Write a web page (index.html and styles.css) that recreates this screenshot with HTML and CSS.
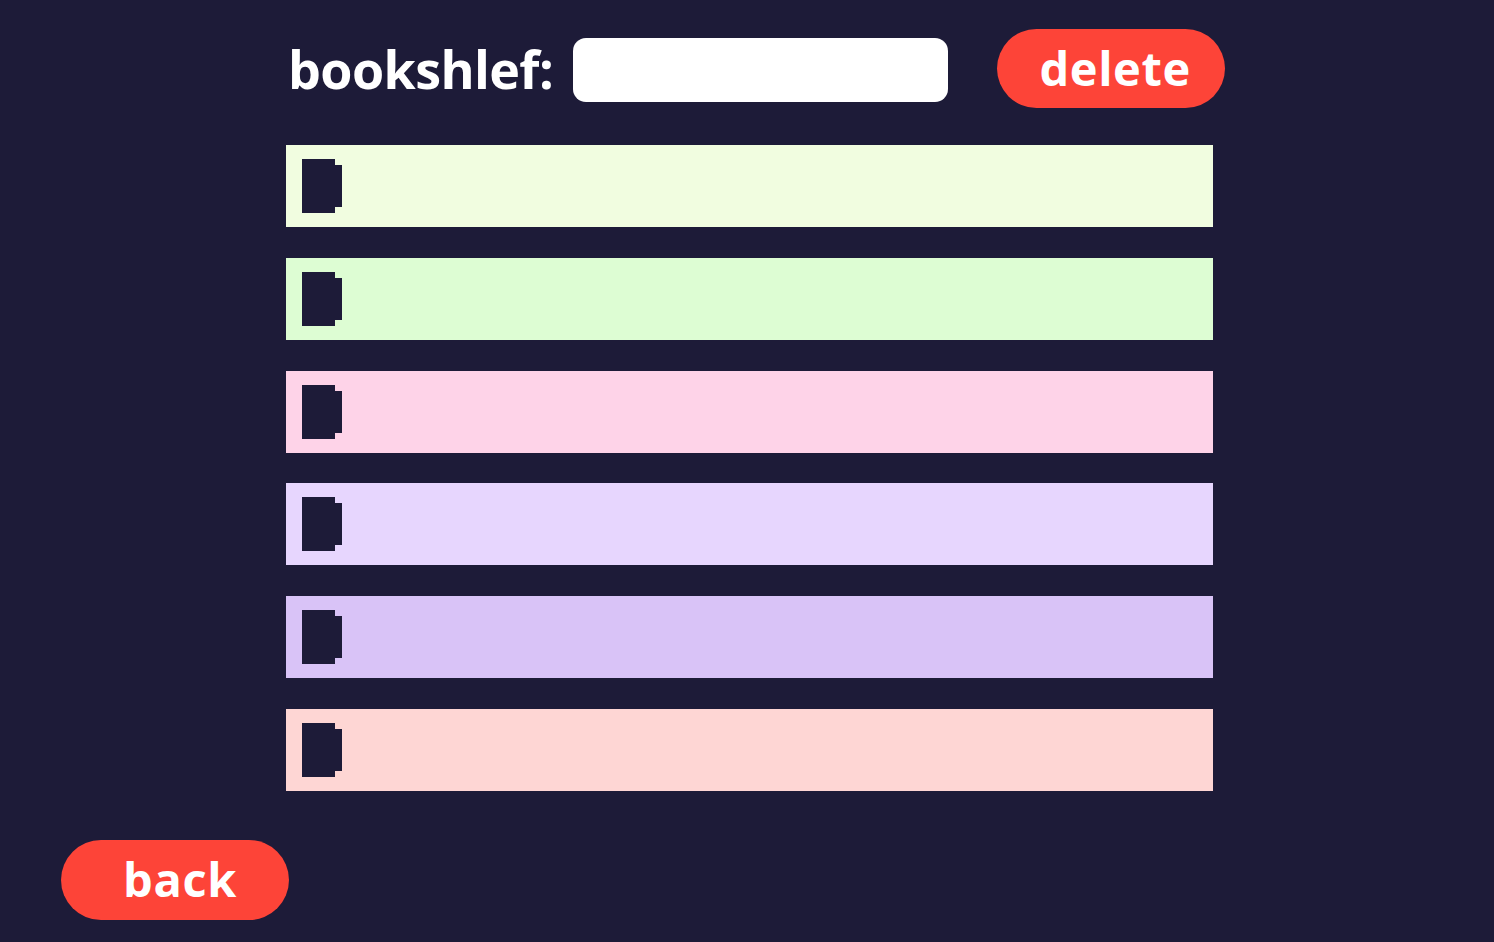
FILE: index.html
```html
<!DOCTYPE html>
<html>
<head>
<meta charset="utf-8">
<link rel="stylesheet" href="styles.css">
</head>
<body>
<div class="page">
  <section class="main">
    <header class="head">
      <h1 class="title">bookshlef:</h1>
      <div class="field"></div>
      <button class="btn btn-delete">delete</button>
    </header>
    <ul class="shelf">
      <li class="bar c1"><span class="book"></span></li>
      <li class="bar c2"><span class="book"></span></li>
      <li class="bar c3"><span class="book"></span></li>
      <li class="bar c4"><span class="book"></span></li>
      <li class="bar c5"><span class="book"></span></li>
      <li class="bar c6"><span class="book"></span></li>
    </ul>
  </section>
  <footer class="foot">
    <button class="btn btn-back">back</button>
  </footer>
</div>
</body>
</html>
```
FILE: styles.css
```css
html, body {
  margin: 0;
  padding: 0;
  background: #1d1b38;
  width: 1494px;
  height: 942px;
  overflow: hidden;
  font-family: "Open Sans", "Noto Sans", sans-serif;
}
.page {
  padding-top: 29px;
}
.main {
  padding-left: 286px;
}
.head {
  display: flex;
  align-items: center;
  height: 79px;
}
.title {
  margin: 0 0 0 2px;
  color: #ffffff;
  font-weight: 700;
  font-size: 52px;
  line-height: 1;
  letter-spacing: -0.6px;
}
.field {
  margin-left: 20px;
  width: 375px;
  height: 64px;
  background: #ffffff;
  border-radius: 13px;
  margin-top: 2px;
}
.btn {
  border: none;
  background: #fd4438;
  color: #ffffff;
  font-family: "Open Sans", "Noto Sans", sans-serif;
  font-weight: 700;
  width: 228px;
  height: 79px;
  border-radius: 40px;
  padding: 0;
  font-size: 47px;
  line-height: 1;
  letter-spacing: 0.6px;
}
.btn-delete {
  margin-left: 49px;
  padding-left: 8px;
}
.shelf {
  list-style: none;
  margin: 37px 0 0 0;
  padding: 0;
  display: flex;
  flex-direction: column;
  gap: 30.8px;
}
.bar {
  width: 927px;
  height: 82px;
  display: flex;
  align-items: center;
  padding-left: 16px;
  box-sizing: border-box;
}
.book {
  position: relative;
  display: block;
  width: 33px;
  height: 54px;
  background: #1d1b38;
}
.book::after {
  content: "";
  position: absolute;
  left: 33px;
  top: 6px;
  width: 7px;
  height: 42px;
  background: #1d1b38;
}
.c1 { background: #f1fde0; }
.c2 { background: #ddfdd3; }
.c3 { background: #fed3e8; }
.c4 { background: #e7d6fe; }
.c5 { background: #d9c3f7; }
.c6 { background: #fed6d4; }
.foot {
  margin-top: 49px;
  padding-left: 61px;
}
.btn-back {
  height: 80px;
  padding-left: 10px;
}
```
